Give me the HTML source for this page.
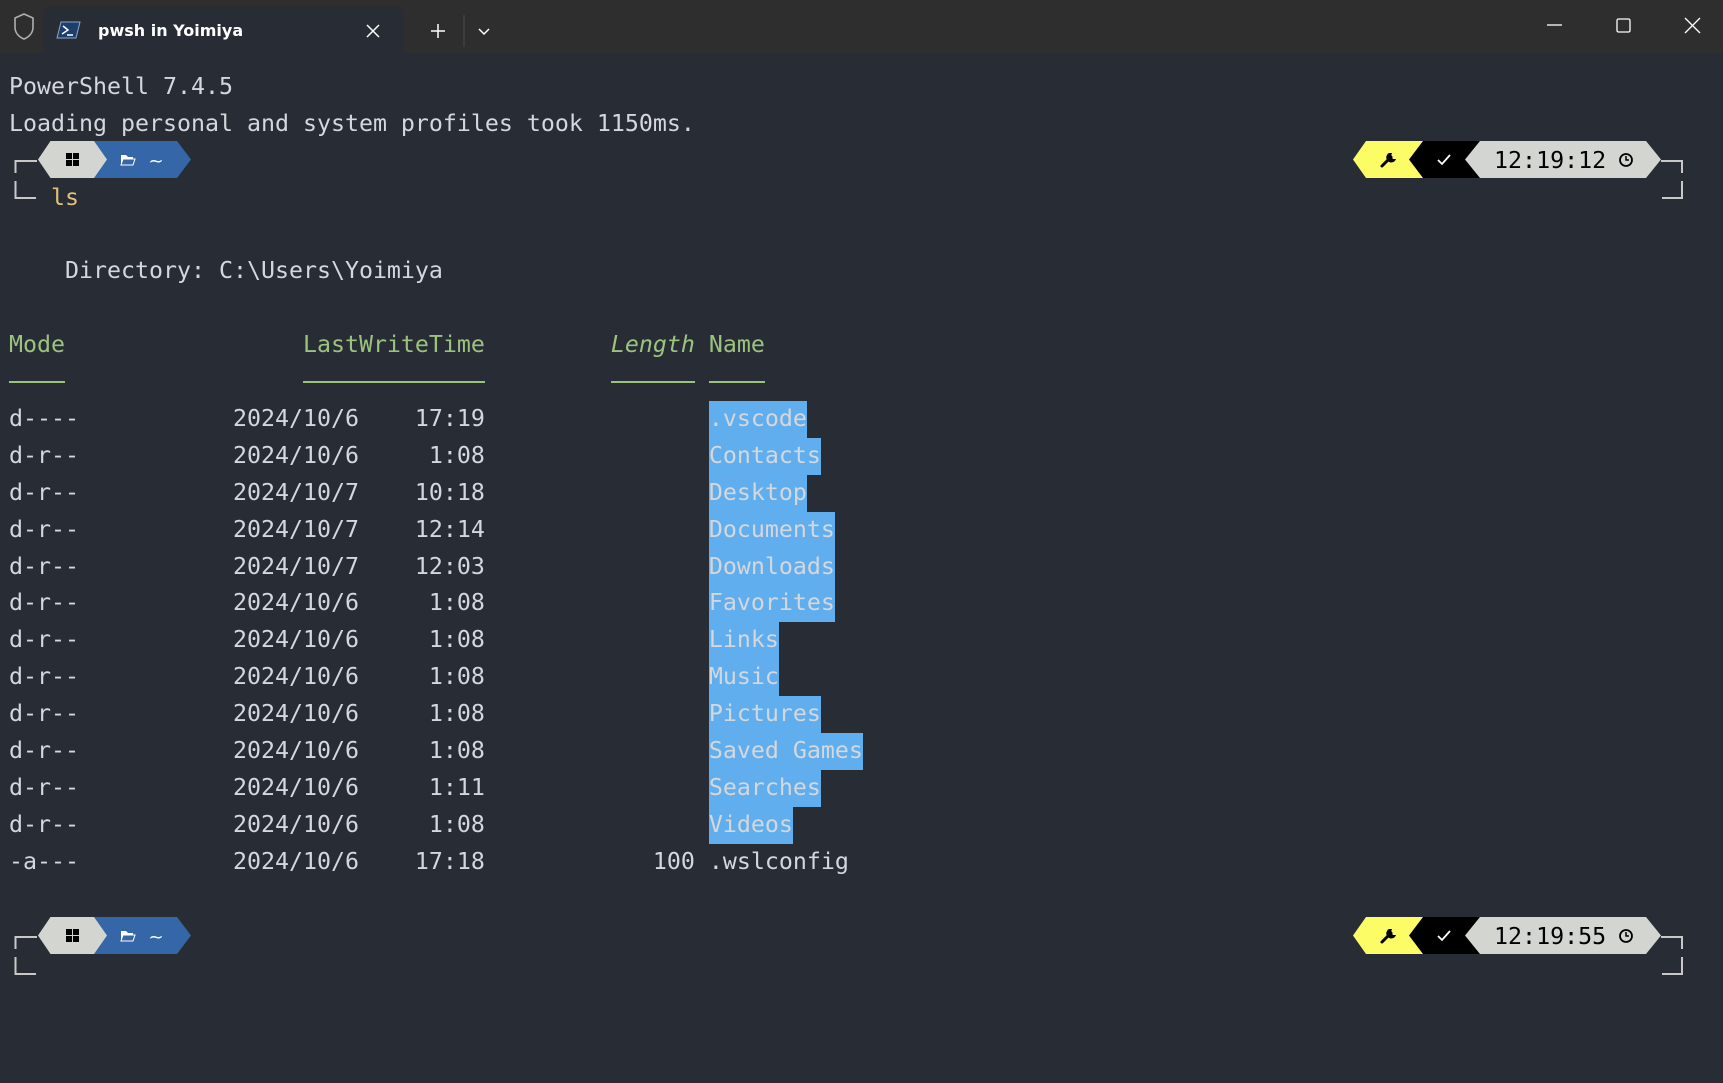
<!DOCTYPE html>
<html><head><meta charset="utf-8"><style>
html,body{margin:0;padding:0;width:1723px;height:1083px;overflow:hidden;background:#282c35;}
#bar{position:absolute;left:0;top:0;width:1723px;height:53px;background:#2e2e2e;}
#tab{position:absolute;left:43px;top:7px;width:361px;height:50px;background:#282c35;border-radius:8px 8px 0 0;}
.t{position:absolute;font-family:"DejaVu Sans","Liberation Sans",sans-serif;color:#fff;font-size:16px;}
#term{position:absolute;left:9px;top:69px;font-family:"DejaVu Sans Mono","Liberation Mono",monospace;font-size:23.26px;color:#d4d7dc;}
.l{height:36.9px;line-height:36.9px;white-space:pre;}
.g{color:#9cc37e}
.y{color:#e5c07b}
.h{background:#61aeee;display:inline-block;height:36.9px;vertical-align:top;}
.d{display:inline-block;height:17px;border-bottom:2px solid #9cc37e;vertical-align:top;}
svg{position:absolute;left:0;top:0;}
</style></head><body>
<div id="bar"></div>
<div id="tab"></div>
<svg width="1723" height="60">
 <path d="M24 14 L33 18 V27 C33 33 29 37 24 39 C19 37 15 33 15 27 V18 Z" fill="none" stroke="#b0b0b0" stroke-width="1.6"/>
 <path d="M61 22 L80 22 L76 38 L57 38 Z" fill="#1e3e6e" stroke="#8aa6cc" stroke-width="1"/>
 <path d="M63 26 L68 30 L62 34 M67 35 L73 35" fill="none" stroke="#fff" stroke-width="1.5"/>
 <path d="M367 25 L379 37 M379 25 L367 37" stroke="#fff" stroke-width="1.5"/>
 <path d="M438 24 V38 M431 31 H445" stroke="#fff" stroke-width="1.5"/>
 <path d="M464 15 V47" stroke="#4a4a4a" stroke-width="1"/>
 <path d="M479 29 L484 34 L489 29" fill="none" stroke="#fff" stroke-width="1.5"/>
 <path d="M1547 25 H1562" stroke="#fff" stroke-width="1.3"/>
 <rect x="1617" y="19" width="13" height="13" rx="1.5" fill="none" stroke="#fff" stroke-width="1.3"/>
 <path d="M1685 18 L1700 33 M1700 18 L1685 33" stroke="#fff" stroke-width="1.3"/>
</svg>
<div class="t" style="left:98px;top:21px;font-weight:bold;">pwsh in Yoimiya</div>

<svg width="1723" height="1083">
 <defs>
 <g id="pr">
  <path d="M15.5 173 V161 H37 M15.5 181 V198 H36" fill="none" stroke="#c8c8c8" stroke-width="2"/>
  <path d="M94 141 H177 L191 159.5 L177 178 H94 Z" fill="#3566a8"/>
  <path d="M38 159.5 L50.5 141 H94 L107 159.5 L94 178 H50.5 Z" fill="#d3d6d0"/>
  <g fill="#000"><rect x="66" y="153" width="6" height="6"/><rect x="73" y="153" width="6" height="6"/><rect x="66" y="160" width="6" height="6"/><rect x="73" y="160" width="6" height="6"/></g>
  <path d="M121 155 H126 L128 157 H133 V165 H121 Z" fill="#fff"/>
  <path d="M123 159 H135 L133 165 H121 Z" fill="#3566a8" stroke="#fff" stroke-width="1"/>
  <text x="156" y="167" font-family="DejaVu Sans" font-size="18" fill="#fff" text-anchor="middle">~</text>
  <path d="M1661 161 H1682 V173 M1682 181 V198 H1662" fill="none" stroke="#c8c8c8" stroke-width="2"/>
  <path d="M1353 159.5 L1366 141 H1430 V178 H1366 Z" fill="#fcfc66"/>
  <path d="M1409 159.5 L1423 141 H1485 V178 H1423 Z" fill="#000"/>
  <path d="M1465 159.5 L1480 141 H1646 L1661 159.5 L1646 178 H1480 Z" fill="#d3d6d0"/>
  <path d="M1382 166 L1391 157" stroke="#000" stroke-width="3" stroke-linecap="round"/>
  <path d="M1389 153 A5 5 0 1 0 1396 159 L1393 159 L1391 156 L1392 153 Z" fill="#000"/>
  <path d="M1438 160 L1442 164 L1450 155" fill="none" stroke="#fff" stroke-width="1.8"/>
  <circle cx="1626" cy="160" r="6" fill="none" stroke="#000" stroke-width="1.8"/>
  <path d="M1626 156 V160 H1629" fill="none" stroke="#000" stroke-width="1.5"/>
 </g>
 </defs>
 <use href="#pr"/>
 <text x="1494" y="168" font-family="DejaVu Sans Mono" font-size="23.3" fill="#000">12:19:12</text>
 <use href="#pr" transform="translate(0,776)"/>
 <text x="1494" y="944" font-family="DejaVu Sans Mono" font-size="23.3" fill="#000">12:19:55</text>
</svg>

<div id="term">
<div class="l">PowerShell 7.4.5</div>
<div class="l">Loading personal and system profiles took 1150ms.</div>
<div class="l"> </div>
<div class="l">   <span class="y">ls</span></div>
<div class="l"> </div>
<div class="l">    Directory: C:\Users\Yoimiya</div>
<div class="l"> </div>
<div class="l g">Mode                 LastWriteTime         <i>Length</i> Name</div>
<div class="l g"><span class="d" style="width:56px"></span>                 <span class="d" style="width:182px"></span>         <span class="d" style="width:84px"></span> <span class="d" style="width:56px"></span></div>
<div class="l">d----           2024/10/6    17:19                <span class="h">.vscode</span></div>
<div class="l">d-r--           2024/10/6     1:08                <span class="h">Contacts</span></div>
<div class="l">d-r--           2024/10/7    10:18                <span class="h">Desktop</span></div>
<div class="l">d-r--           2024/10/7    12:14                <span class="h">Documents</span></div>
<div class="l">d-r--           2024/10/7    12:03                <span class="h">Downloads</span></div>
<div class="l">d-r--           2024/10/6     1:08                <span class="h">Favorites</span></div>
<div class="l">d-r--           2024/10/6     1:08                <span class="h">Links</span></div>
<div class="l">d-r--           2024/10/6     1:08                <span class="h">Music</span></div>
<div class="l">d-r--           2024/10/6     1:08                <span class="h">Pictures</span></div>
<div class="l">d-r--           2024/10/6     1:08                <span class="h">Saved Games</span></div>
<div class="l">d-r--           2024/10/6     1:11                <span class="h">Searches</span></div>
<div class="l">d-r--           2024/10/6     1:08                <span class="h">Videos</span></div>
<div class="l">-a---           2024/10/6    17:18            100 .wslconfig</div>
</div>
</body></html>
